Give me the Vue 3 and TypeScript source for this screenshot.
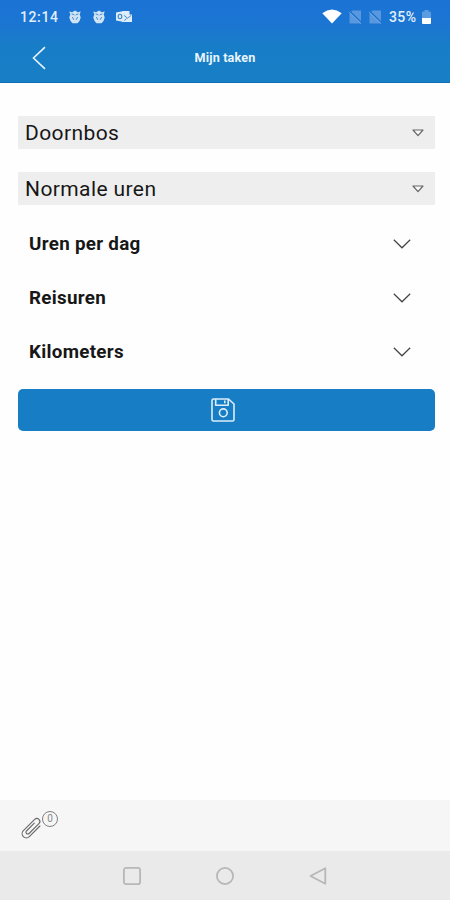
<script setup lang="ts">
import { ref } from 'vue'

interface Choice { id: string; value: string }
interface Section { id: string; title: string }

const choices = ref<Choice[]>([
  { id: 'project', value: 'Doornbos' },
  { id: 'type', value: 'Normale uren' },
])

const sections: Section[] = [
  { id: 'day', title: 'Uren per dag' },
  { id: 'travel', title: 'Reisuren' },
  { id: 'km', title: 'Kilometers' },
]

const attachments = ref<number>(0)
</script>

<template>
  <div class="screen">
    <header class="top">
      <div class="status">
        <span class="clock">12:14</span>
        <svg v-for="n in 2" :key="n" class="crest" viewBox="0 0 12 14">
          <path d="M.3 1.500L3.200 2.200L6 .5L8.800 2.200L11.700 1.500L10.700 4.500L11.700 7.500L10.500 11L8.500 13.200H3.500L1.500 11L.3 7.500L1.300 4.500Z" fill="#cfe4f5" />
          <path d="M2.500 3.800L5.400 5M9.500 3.800L6.600 5M3.400 7L4.800 9.800M8.600 7L7.200 9.800" stroke="#4c8cc7" stroke-width="1" fill="none" />
        </svg>
        <svg class="mail" viewBox="0 0 16 13">
          <path d="M0 2.500L8 1V12L0 10.500Z" fill="#dcecf8" />
          <path d="M6.500 1h7v3.500h2.500v7.500H6Z" fill="#dcecf8" />
          <ellipse cx="4" cy="6.500" rx="1.800" ry="2.200" fill="none" stroke="#3d85c9" stroke-width="1.100" />
          <path d="M8 5.300L11.500 8.200L15.300 5.300M8.300 10.800L10.500 8.400" fill="none" stroke="#3d85c9" stroke-width=".9" />
        </svg>
        <svg class="wifi" viewBox="0 0 20 15">
          <path d="M0.300 4.200Q10-3.200 19.700 4.200L10 14.500Z" fill="#fff" />
        </svg>
        <svg v-for="n in 2" :key="'sim' + n" class="sim" viewBox="0 0 14 14">
          <path d="M4.500.5H13V13.500H1.500V4Z" fill="#5998de" />
          <path d="M1.500 1L13.500 12.500" stroke="#1f74d0" stroke-width="1.500" />
          <path d="M.8 2L12.800 13.500" stroke="#75ace5" stroke-width=".9" />
        </svg>
        <span class="percent">35%</span>
        <svg class="battery" viewBox="0 0 9 14">
          <path d="M2.500 0h4v1.500h1.500q1 0 1 1V8H0V2.500q0-1 1-1h1.500Z" fill="#5c9ce1" />
          <path d="M0 8h9v5q0 1-1 1H1q-1 0-1-1Z" fill="#fff" />
        </svg>
      </div>
      <div class="titlebar">
        <button class="back" aria-label="Terug">
          <svg viewBox="0 0 14 24"><path d="M13 1.200L1.500 12L13 22.800" fill="none" stroke="#e8f4fb" stroke-width="1.600" /></svg>
        </button>
        <h1>Mijn taken</h1>
      </div>
    </header>

    <main>
      <button v-for="choice in choices" :key="choice.id" class="choice">
        <span>{{ choice.value }}</span>
        <svg viewBox="0 0 12 8"><path d="M1 1H11L6 6.700Z" fill="#f8f8f8" stroke="#666" stroke-width="1.200" stroke-linejoin="round" /></svg>
      </button>

      <div class="sections">
        <button v-for="section in sections" :key="section.id" class="section">
          <span>{{ section.title }}</span>
          <svg viewBox="0 0 18 10"><path d="M.8.800L9 8.800L17.200.800" fill="none" stroke="#444" stroke-width="1.200" /></svg>
        </button>
      </div>

      <button class="save" aria-label="Opslaan">
        <svg viewBox="0 0 24 24" fill="none" stroke="#dceefb" stroke-width="1.600" stroke-linejoin="round">
          <path d="M2.500 1H17.500L23 6V21.500Q23 23 21.500 23H2.500Q1 23 1 21.500V2.500Q1 1 2.500 1Z" />
          <path d="M4.700 1V7.300H17.200V1M13.800 2.600V5.300" />
          <circle cx="12.300" cy="14.800" r="3.900" />
        </svg>
      </button>
    </main>

    <footer class="attachments">
      <svg class="clip" viewBox="0 0 20 20" fill="none" stroke="#6b6b6b" stroke-width="1.150" stroke-linecap="round">
        <path transform="rotate(-45 10 10)" d="M17 14.200H2A4.200 4.200 0 0 1 2 5.800H18A3 3 0 0 1 18 11.800H4A1.800 1.800 0 0 1 4 8.200H15" />
      </svg>
      <span class="count">{{ attachments }}</span>
    </footer>

    <nav class="system">
      <svg viewBox="0 0 20 20"><rect x="1.900" y="1.900" width="16.200" height="16.200" rx="2.200" /></svg>
      <svg viewBox="0 0 20 20"><circle cx="10" cy="10" r="8.100" /></svg>
      <svg viewBox="0 0 20 20"><path d="M17.300 2.300V17.700L2.500 10Z" /></svg>
    </nav>
  </div>
</template>

<style>
body {
  margin: 0;
}
</style>

<style scoped>
.screen {
  display: flex;
  flex-direction: column;
  height: 900px;
  background: #fefefe;
  color: #171717;
  font-family: Roboto, "Liberation Sans", sans-serif;
}
svg {
  display: block;
  flex: none;
}
button {
  border: 0;
  padding: 0;
  background: none;
  color: inherit;
  font: inherit;
  text-align: left;
}
.top {
  box-sizing: border-box;
  height: 83px;
  background: linear-gradient(#1b74d5 0, #1b75d2 24px, #187dc7 46px, #177fc6 100%);
  border-bottom: 1px solid #126fb4;
}
.status {
  display: flex;
  align-items: center;
  height: 33px;
  padding: 0 19px 0 20px;
  color: #e1effb;
}
.clock {
  width: 49px;
  font-size: 14px;
  font-weight: 500;
  letter-spacing: 0.6px;
}
.crest {
  width: 12px;
  height: 14px;
  margin-right: 12px;
}
.mail {
  width: 16px;
  height: 13px;
  margin-left: -1px;
}
.wifi {
  width: 20px;
  height: 15px;
  margin-left: auto;
}
.sim {
  width: 14px;
  height: 14px;
  margin-left: 6px;
}
.percent {
  width: 28px;
  margin: 0 5px 0 7px;
  font-size: 14px;
  font-weight: 500;
  letter-spacing: 0.4px;
}
.battery {
  width: 9px;
  height: 14px;
}
.titlebar {
  display: grid;
  grid-template-columns: 60px 1fr 60px;
  align-items: center;
  height: 49px;
}
.back svg {
  width: 14px;
  height: 24px;
  margin-left: 32px;
}
h1 {
  margin: 0;
  color: #e8f5fc;
  font-size: 12.6px;
  font-weight: 700;
  letter-spacing: 0.15px;
  text-align: center;
}
main {
  display: flex;
  flex: 1;
  flex-direction: column;
  padding: 33px 15px 0 18px;
}
.choice {
  display: flex;
  align-items: center;
  justify-content: space-between;
  height: 33px;
  margin-bottom: 23px;
  padding: 0 11px 0 7px;
  background: #eee;
  font-size: 21px;
  letter-spacing: 0.4px;
}
.choice svg {
  width: 12px;
  height: 8px;
}
.sections {
  margin-top: -11px;
}
.section {
  display: flex;
  align-items: center;
  justify-content: space-between;
  width: 100%;
  height: 54px;
  padding: 0 24px 0 11px;
  font-size: 18.8px;
  font-weight: 700;
  letter-spacing: 0.3px;
}
.section svg {
  width: 18px;
  height: 10px;
}
.save {
  display: flex;
  align-items: center;
  justify-content: center;
  height: 42px;
  margin-top: 10px;
  padding-right: 7px;
  border-radius: 5px;
  background: #177ec5;
}
.save svg {
  width: 24px;
  height: 24px;
}
.attachments {
  display: flex;
  align-items: flex-start;
  box-sizing: border-box;
  height: 51px;
  padding: 11px 22px;
  background: #f6f6f6;
}
.clip {
  width: 20px;
  height: 20px;
  margin-top: 7px;
  overflow: visible;
}
.count {
  box-sizing: border-box;
  width: 16px;
  height: 16px;
  border: 1px solid #808080;
  border-radius: 50%;
  color: #888;
  font-size: 10px;
  line-height: 14px;
  text-align: center;
}
.system {
  display: flex;
  align-items: center;
  justify-content: center;
  gap: 73px;
  height: 49px;
  background: #eaeaea;
}
.system svg {
  width: 20px;
  height: 20px;
  fill: none;
  stroke: #b7b7b7;
  stroke-width: 1.8;
  stroke-linejoin: round;
}
</style>
